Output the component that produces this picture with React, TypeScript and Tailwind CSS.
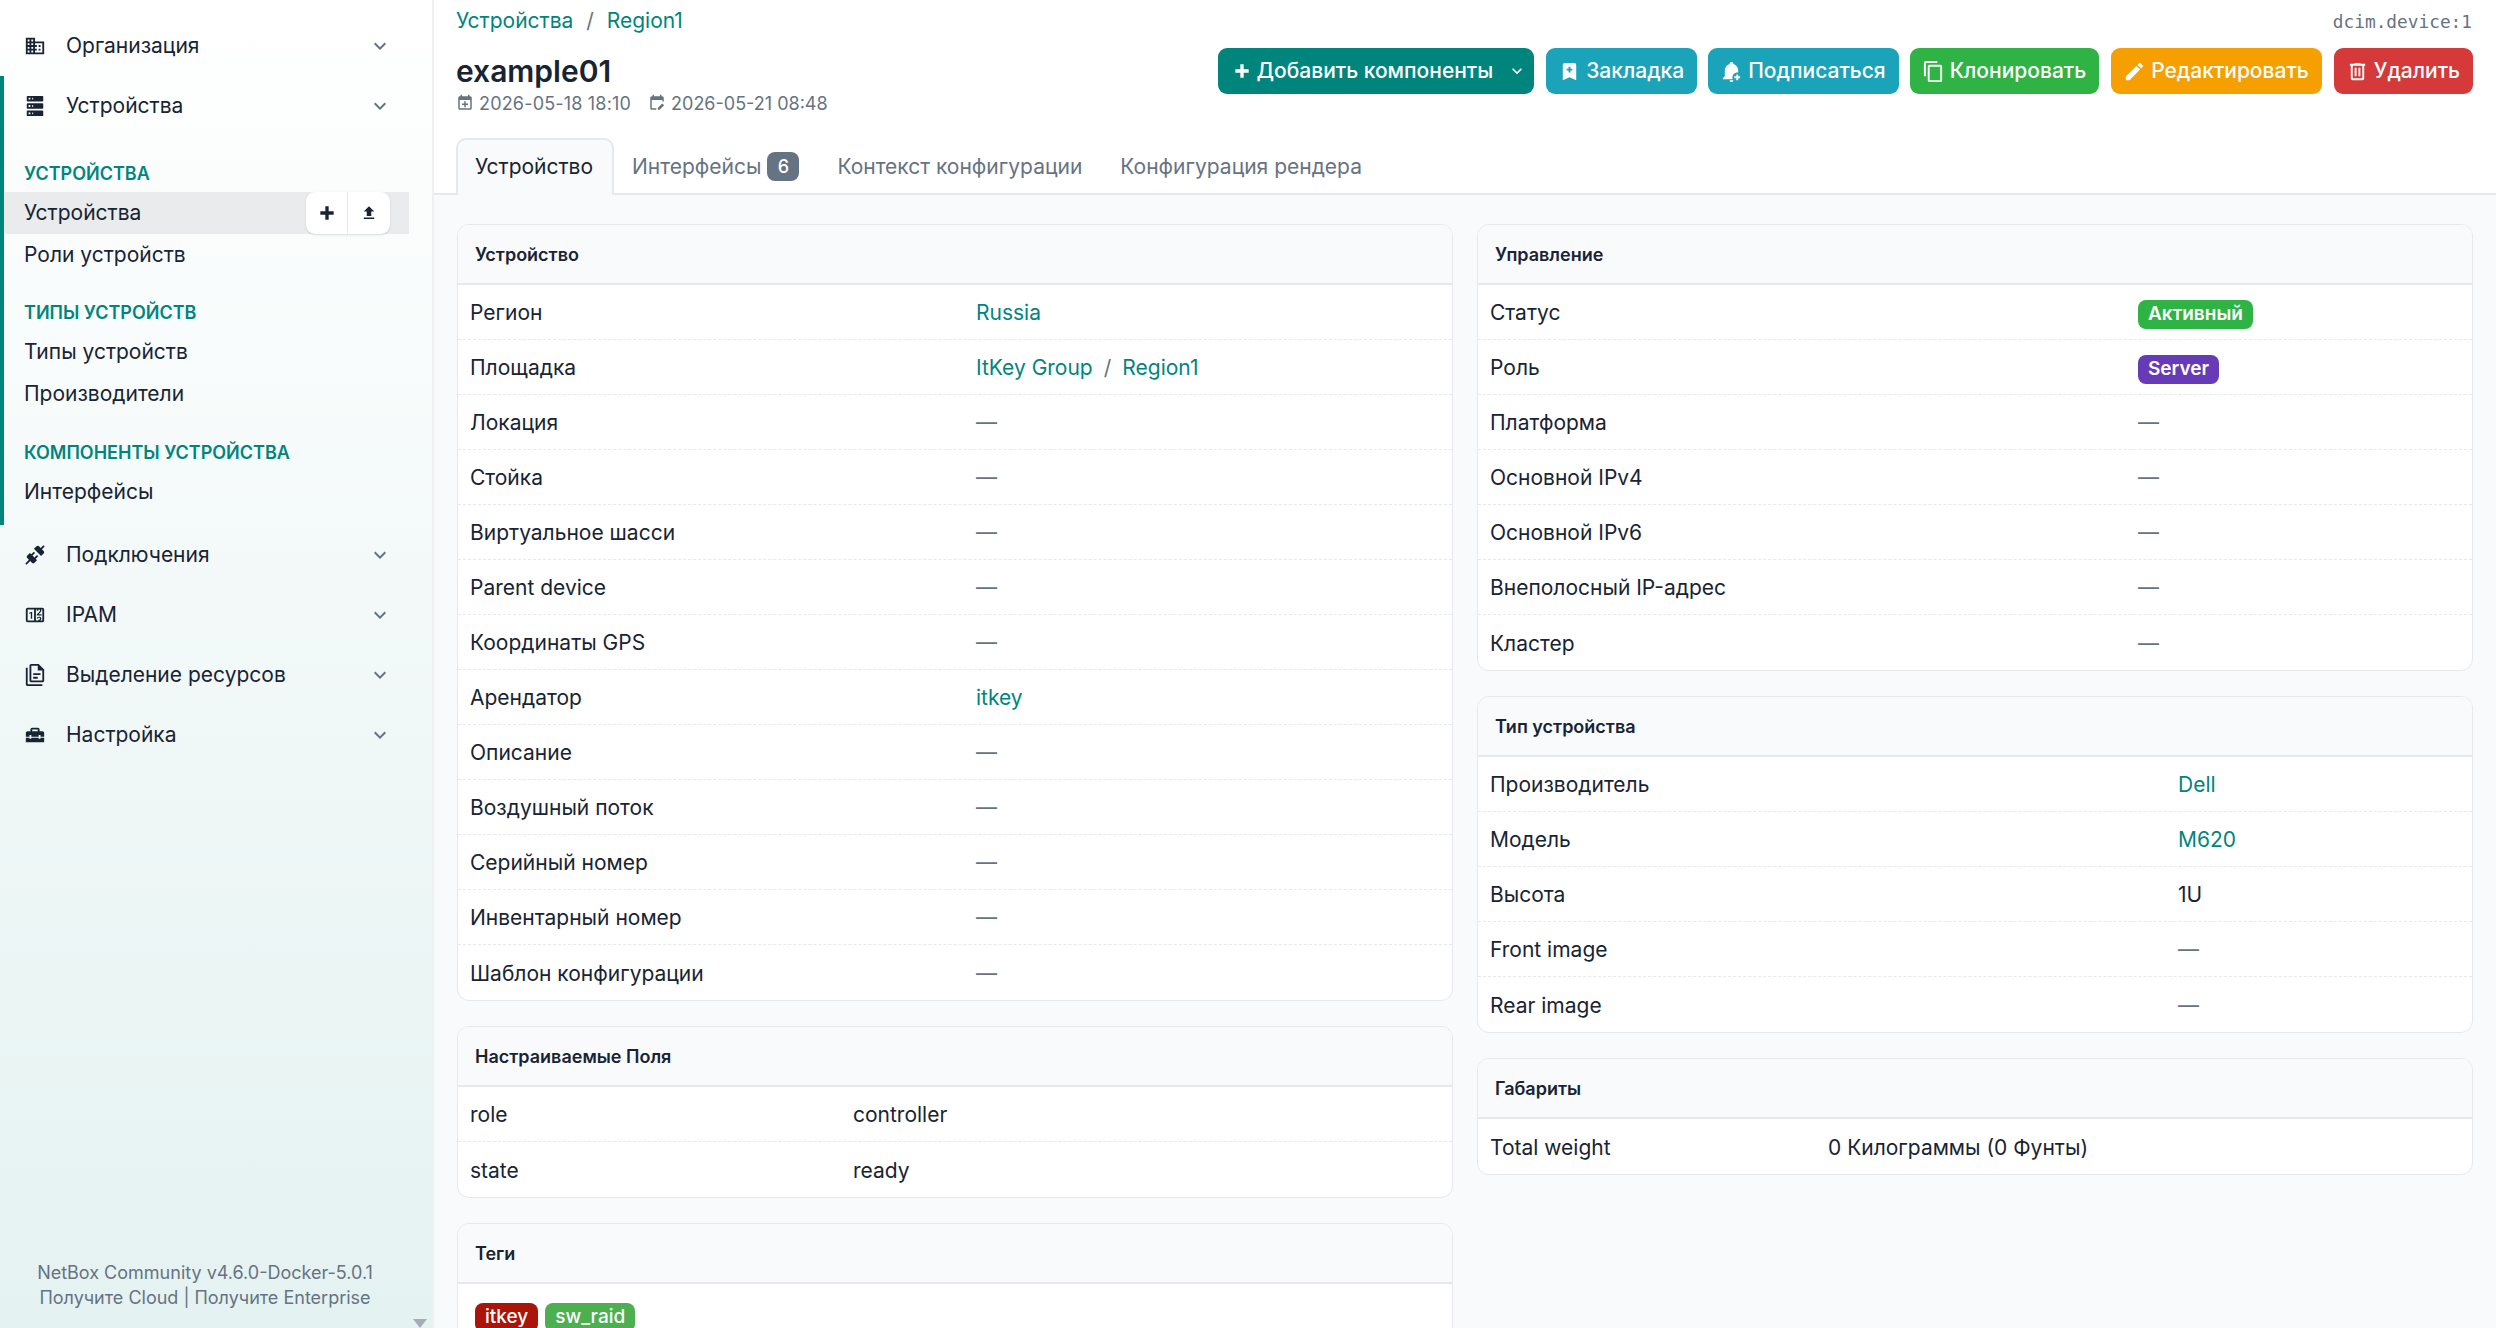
import React from "react";

const P = {
  domain: "M18,15H16V17H18M18,11H16V13H18M20,19H12V17H14V15H12V13H14V11H12V9H20M10,7H8V5H10M10,11H8V9H10M10,15H8V13H10M10,19H8V17H10M6,7H4V5H6M6,11H4V9H6M6,15H4V13H6M6,19H4V17H6M12,7V3H2V21H22V7H12Z",
  server: "M4,1H20A1,1 0 0,1 21,2V6A1,1 0 0,1 20,7H4A1,1 0 0,1 3,6V2A1,1 0 0,1 4,1M4,9H20A1,1 0 0,1 21,10V14A1,1 0 0,1 20,15H4A1,1 0 0,1 3,14V10A1,1 0 0,1 4,9M4,17H20A1,1 0 0,1 21,18V22A1,1 0 0,1 20,23H4A1,1 0 0,1 3,22V18A1,1 0 0,1 4,17M9,5H10V3H9V5M9,13H10V11H9V13M9,21H10V19H9V21M5,3V5H7V3H5M5,11V13H7V11H5M5,19V21H7V19H5Z",
  connection: "M21.4 7.5C22.2 8.3 22.2 9.6 21.4 10.3L18.6 13.1L10.8 5.3L13.6 2.5C14.4 1.7 15.7 1.7 16.4 2.5L18.2 4.3L21.2 1.3L22.6 2.7L19.6 5.7L21.4 7.5M15.6 13.3L14.2 11.9L11.4 14.7L9.3 12.6L12.1 9.8L10.7 8.4L7.9 11.2L6.4 9.8L3.6 12.6C2.8 13.4 2.8 14.7 3.6 15.4L5.4 17.2L1.4 21.2L2.8 22.6L6.8 18.6L8.6 20.4C9.4 21.2 10.7 21.2 11.4 20.4L14.2 17.6L12.8 16.2L15.6 13.3Z",
  counter: "M4,4H20A2,2 0 0,1 22,6V18A2,2 0 0,1 20,20H4A2,2 0 0,1 2,18V6A2,2 0 0,1 4,4M4,6V18H11V6H4M20,18V6H18.76C19,6.54 18.95,7.07 18.95,7.13C18.88,7.8 18.41,8.5 18.24,8.75L15.91,11.3L19.23,11.28L19.24,12.5L14.04,12.47L14,11.47C14,11.47 17.05,8.24 17.2,7.95C17.34,7.67 17.91,6 16.5,6C15.27,6.05 15.41,7.3 15.41,7.3L13.87,7.3C13.87,7.3 13.88,6.65 14.25,6H13V18H15.58L15.57,17.14L16.54,17.13C16.54,17.13 17.45,16.97 17.46,16.08C17.5,15.08 16.65,15.08 16.5,15.08C16.37,15.08 15.43,15.13 15.43,15.95H13.91C13.91,15.95 13.95,13.89 16.5,13.89C19.1,13.89 18.96,15.91 18.96,15.91C18.96,15.91 19,17.16 17.85,17.63L18.37,18H20M8.92,16H7.42V10.2L5.62,10.76V9.53L8.76,8.41H8.92V16Z",
  docs: "M16 0H8C6.9 0 6 .9 6 2V18C6 19.1 6.9 20 8 20H20C21.1 20 22 19.1 22 18V6L16 0M20 18H8V2H15V7H20V18M4 4V22H20V24H4C2.9 24 2 23.1 2 22V4H4M10 10V12H18V10H10M10 14V16H15V14H10Z",
  toolbox: "M18 16H16V15H8V16H6V15H2V20H22V15H18V16M20 8H17V6C17 4.9 16.1 4 15 4H9C7.9 4 7 4.9 7 6V8H4C2.9 8 2 8.9 2 10V14H6V12H8V14H16V12H18V14H22V10C22 8.9 21.1 8 20 8M15 8H9V6H15V8Z",
  plus: "M20 14H14V20H10V14H4V10H10V4H14V10H20V14Z",
  upload: "M9,16V10H5L12,3L19,10H15V16H9M5,20V18H19V20H5Z",
  chevron: "M7.41,8.58L12,13.17L16.59,8.58L18,10L12,16L6,10L7.41,8.58Z",
  bookmark: "M17,3A2,2 0 0,1 19,5V21L12,18L5,21V5C5,3.89 5.9,3 7,3H17M11,7V9H9V11H11V13H13V11H15V9H13V7H11Z",
  bell: "M10 21H14A2 2 0 0 1 12 23A2 2 0 0 1 10 21ZM13.08 20H3V19L5 17V11C5 7.9 7.03 5.17 10 4.29V4A2 2 0 0 1 14 4V4.29C16.97 5.17 19 7.9 19 11V13.08C18.67 13.03 18.34 13 18 13C15.24 13 13 15.24 13 18C13 18.7 13.03 19.34 13.08 20ZM17 15V17H15V19H17V21H19V19H21V17H19V15H17Z",
  copy: "M19,21H8V7H19M19,5H8A2,2 0 0,0 6,7V21A2,2 0 0,0 8,23H19A2,2 0 0,0 21,21V7A2,2 0 0,0 19,5M16,1H4A2,2 0 0,0 2,3V17H4V3H16V1Z",
  pencil: "M20.71,7.04C21.1,6.65 21.1,6 20.71,5.63L18.37,3.29C18,2.9 17.35,2.9 16.96,3.29L15.12,5.12L18.87,8.87M3,17.25V21H6.75L17.81,9.93L14.06,6.18L3,17.25Z",
  trash: "M9,3V4H4V6H5V19A2,2 0 0,0 7,21H17A2,2 0 0,0 19,19V6H20V4H15V3H9M7,6H17V19H7V6M9,8V17H11V8H9M13,8V17H15V8H13Z",
  calPlus: "M19,19V8H5V19H19M16,1H18V3H19A2,2 0 0,1 21,5V19C21,20.11 20.1,21 19,21H5C3.89,21 3,20.1 3,19V5C3,3.89 3.89,3 5,3H6V1H8V3H16V1M11,9.5H13V12.5H16V14.5H13V17.5H11V14.5H8V12.5H11V9.5Z",
  calEdit: "M19,3H18V1H16V3H8V1H6V3H5A2,2 0 0,0 3,5V19A2,2 0 0,0 5,21H11V19H5V8H19V10H21V5A2,2 0 0,0 19,3M13,21V18.5L19,12.5L21.5,15L15.5,21H13Z",
};

const Icon = ({ d, className }: { d: string; className?: string }) => (
  <svg viewBox="0 0 24 24" fill="currentColor" className={className}>
    <path d={d} />
  </svg>
);

const NavGroup = ({ icon, label }: { icon: string; label: string }) => (
  <div className="flex h-[60px] items-center text-[21px] text-[#182433]">
    <Icon d={icon} className="ml-[24px] h-[22px] w-[22px] shrink-0" />
    <span className="ml-[20px]">{label}</span>
    <Icon d={P.chevron} className="absolute left-[368px] h-[24px] w-[24px] text-[#667382]" />
  </div>
);

const NavHeading = ({ children }: { children: React.ReactNode }) => (
  <div className="flex h-[38px] items-center pl-[20px] text-[18px] font-semibold uppercase text-[#00857d]">{children}</div>
);

const NavItem = ({ children, active }: { children: React.ReactNode; active?: boolean }) => (
  <div className={`relative flex h-[42px] items-center pl-[20px] text-[21px] text-[#182433] ${active ? "bg-[#e9ebec]" : ""}`}>
    {children}
  </div>
);

const Button = ({ icon, label, color }: { icon: string; label: string; color: string }) => (
  <div className={`flex h-[46px] items-center gap-[5px] rounded-[9px] pl-[12px] pr-[13px] pt-[1px] text-[21px] font-medium text-white ${color}`}>
    <Icon d={icon} className="h-[23px] w-[23px]" />
    {label}
  </div>
);

const Dash = () => <span className="text-[#667382]">—</span>;

const Link = ({ children }: { children: React.ReactNode }) => <span className="text-[#00857d]">{children}</span>;

const Card = ({ title, className, children }: { title: string; className?: string; children: React.ReactNode }) => (
  <div className={`overflow-hidden rounded-[12px] border border-[#e6e8ec] bg-white ${className ?? ""}`}>
    <div className="flex h-[60px] items-center border-b-2 border-[#e6e8ec] bg-[#f9fafb] pl-[17px] pt-[2px] text-[18px] font-semibold text-[#182433]">{title}</div>
    {children}
  </div>
);

const Rows = ({ rows, labelWidth }: { rows: [string, React.ReactNode][]; labelWidth: string }) => (
  <div>
    {rows.map(([label, value], i) => (
      <div key={label} className={`flex h-[55px] items-center pt-[3px] text-[21px] text-[#182433] ${i < rows.length - 1 ? "border-b border-dashed border-[#e6e8ec]" : ""}`}>
        <div className={`pl-[12px] ${labelWidth}`}>{label}</div>
        <div className="pl-[12px]">{value}</div>
      </div>
    ))}
  </div>
);

const Badge = ({ children, color }: { children: React.ReactNode; color: string }) => (
  <span className={`inline-flex h-[29px] items-center rounded-[8px] px-[10px] text-[19px] font-semibold text-white ${color}`}>{children}</span>
);

export default function App() {
  return (
    <div className="flex h-screen overflow-hidden bg-[#f9fafb] font-['Inter',sans-serif]">
      {/* sidebar */}
      <aside className="relative flex w-[434px] shrink-0 flex-col border-r-2 border-[#eef0f3] bg-gradient-to-b from-white to-[#e4f2f1] pt-[16px]">
        <NavGroup icon={P.domain} label="Организация" />
        <div className="w-[409px] border-l-[4px] border-[#00857d] pb-[12px]">
          <div className="-ml-[4px]">
            <NavGroup icon={P.server} label="Устройства" />
          </div>
          <div className="mt-[18px]">
            <NavHeading>Устройства</NavHeading>
            <NavItem active>
              Устройства
              <div className="absolute left-[302px] top-0 flex h-[42px] w-[84px] rounded-[9px] bg-white text-[#182433] shadow-sm">
                <div className="flex w-[42px] items-center justify-center border-r border-[#e6e8ec]">
                  <Icon d={P.plus} className="h-[20px] w-[20px]" />
                </div>
                <div className="flex w-[42px] items-center justify-center">
                  <Icon d={P.upload} className="h-[18px] w-[18px]" />
                </div>
              </div>
            </NavItem>
            <NavItem>Роли устройств</NavItem>
          </div>
          <div className="mt-[17px]">
            <NavHeading>Типы устройств</NavHeading>
            <NavItem>Типы устройств</NavItem>
            <NavItem>Производители</NavItem>
          </div>
          <div className="mt-[18px]">
            <NavHeading>Компоненты устройства</NavHeading>
            <NavItem>Интерфейсы</NavItem>
          </div>
        </div>
        <NavGroup icon={P.connection} label="Подключения" />
        <NavGroup icon={P.counter} label="IPAM" />
        <NavGroup icon={P.docs} label="Выделение ресурсов" />
        <NavGroup icon={P.toolbox} label="Настройка" />
        <div className="mt-auto flex w-[410px] flex-col items-center pb-[18px] text-[18px] leading-[25px] text-[#667382]">
          <div>NetBox Community v4.6.0-Docker-5.0.1</div>
          <div>Получите Cloud | Получите Enterprise</div>
        </div>
        <div className="absolute bottom-0 left-[413px] h-0 w-0 border-x-[7px] border-t-[9px] border-x-transparent border-t-[#a6acb5]" />
      </aside>

      {/* main */}
      <main className="min-w-0 flex-1">
        <div className="border-b-2 border-[#e6e8ec] bg-white">
          <div className="flex items-start justify-between pl-[22px] pr-[24px] pt-[5px]">
            <div className="text-[21px] text-[#00857d]">
              Устройства <span className="mx-[7px] text-[#667382]">/</span> Region1
            </div>
            <div className="mt-[3px] font-['DejaVu_Sans_Mono',monospace] text-[17.8px] leading-[28px] text-[#667382]">dcim.device:1</div>
          </div>
          <div className="mt-[11px] flex items-start justify-between pl-[22px] pr-[23px]">
            <div>
              <div className="mt-[3px] text-[30px] font-semibold leading-[40px] text-[#182433]">example01</div>
              <div className="-mt-[1px] flex items-center text-[18px] text-[#667382]">
                <Icon d={P.calPlus} className="h-[18px] w-[18px]" />
                <span className="ml-[5px] tracking-[0.01em]">2026-05-18 18:10</span>
                <Icon d={P.calEdit} className="ml-[17px] h-[18px] w-[18px]" />
                <span className="ml-[5px]">2026-05-21 08:48</span>
              </div>
            </div>
            <div className="flex items-start gap-[12px]">
              <div className="flex h-[46px] items-center rounded-[9px] bg-[#00857d] pl-[14px] pr-[7px] pt-[1px] text-[21px] font-medium text-white">
                <Icon d={P.plus} className="h-[20px] w-[20px]" />
                <span className="ml-[5px]">Добавить компоненты</span>
                <Icon d={P.chevron} className="ml-[14px] h-[20px] w-[20px]" />
              </div>
              <Button icon={P.bookmark} label="Закладка" color="bg-[#1ba3b9]" />
              <div className="-mx-[1px]">
                <Button icon={P.bell} label="Подписаться" color="bg-[#1ba3b9]" />
              </div>
              <Button icon={P.copy} label="Клонировать" color="bg-[#2fb344]" />
              <Button icon={P.pencil} label="Редактировать" color="bg-[#f59f00]" />
              <Button icon={P.trash} label="Удалить" color="bg-[#d63939]" />
            </div>
          </div>
          <div className="-mb-[2px] mt-[21px] flex pl-[22px] text-[21px] text-[#667382]">
            <div className="flex h-[57px] w-[158px] items-center justify-center rounded-t-[10px] border-2 border-b-0 border-[#e6e8ec] bg-[#f9fafb] pr-[2px] text-[#182433]">Устройство</div>
            <div className="ml-[18px] flex h-[55px] items-center pt-[3px]">
              Интерфейсы
              <span className="ml-[6px] flex h-[29px] w-[32px] items-center justify-center rounded-[8px] bg-[#667382] text-[18px] font-medium text-white">6</span>
            </div>
            <div className="ml-[38px] flex h-[55px] items-center pt-[3px]">Контекст конфигурации</div>
            <div className="ml-[38px] flex h-[55px] items-center pt-[3px]">Конфигурация рендера</div>
          </div>
        </div>

        <div className="grid grid-cols-2 items-start gap-[24px] pl-[23px] pr-[23px] pt-[29px]">
          <div className="flex flex-col gap-[25px]">
            <Card title="Устройство">
              <Rows
                labelWidth="w-[506px]"
                rows={[
                  ["Регион", <Link>Russia</Link>],
                  ["Площадка", <span><Link>ItKey Group</Link><span className="mx-[11px] text-[#667382]">/</span><Link>Region1</Link></span>],
                  ["Локация", <Dash />],
                  ["Стойка", <Dash />],
                  ["Виртуальное шасси", <Dash />],
                  ["Parent device", <Dash />],
                  ["Координаты GPS", <Dash />],
                  ["Арендатор", <Link>itkey</Link>],
                  ["Описание", <Dash />],
                  ["Воздушный поток", <Dash />],
                  ["Серийный номер", <Dash />],
                  ["Инвентарный номер", <Dash />],
                  ["Шаблон конфигурации", <Dash />],
                ]}
              />
            </Card>
            <Card title="Настраиваемые Поля">
              <Rows labelWidth="w-[383px]" rows={[["role", "controller"], ["state", "ready"]]} />
            </Card>
            <Card title="Теги">
              <div className="flex h-[80px] gap-[7px] pl-[17px] pt-[19px]">
                <span className="flex h-[29px] items-center rounded-[8px] bg-[#aa1409] px-[10px] text-[19px] font-medium text-white">itkey</span>
                <span className="flex h-[29px] items-center rounded-[8px] bg-[#4caf50] px-[10px] text-[19px] font-medium text-white">sw_raid</span>
              </div>
            </Card>
          </div>
          <div className="flex flex-col gap-[25px]">
            <Card title="Управление">
              <Rows
                labelWidth="w-[648px]"
                rows={[
                  ["Статус", <Badge color="bg-[#2fb344]">Активный</Badge>],
                  ["Роль", <Badge color="bg-[#673ab7]">Server</Badge>],
                  ["Платформа", <Dash />],
                  ["Основной IPv4", <Dash />],
                  ["Основной IPv6", <Dash />],
                  ["Внеполосный IP-адрес", <Dash />],
                  ["Кластер", <Dash />],
                ]}
              />
            </Card>
            <Card title="Тип устройства">
              <Rows
                labelWidth="w-[688px]"
                rows={[
                  ["Производитель", <Link>Dell</Link>],
                  ["Модель", <Link>M620</Link>],
                  ["Высота", "1U"],
                  ["Front image", <Dash />],
                  ["Rear image", <Dash />],
                ]}
              />
            </Card>
            <Card title="Габариты">
              <Rows labelWidth="w-[338px]" rows={[["Total weight", "0 Килограммы (0 Фунты)"]]} />
            </Card>
          </div>
        </div>
      </main>
    </div>
  );
}
